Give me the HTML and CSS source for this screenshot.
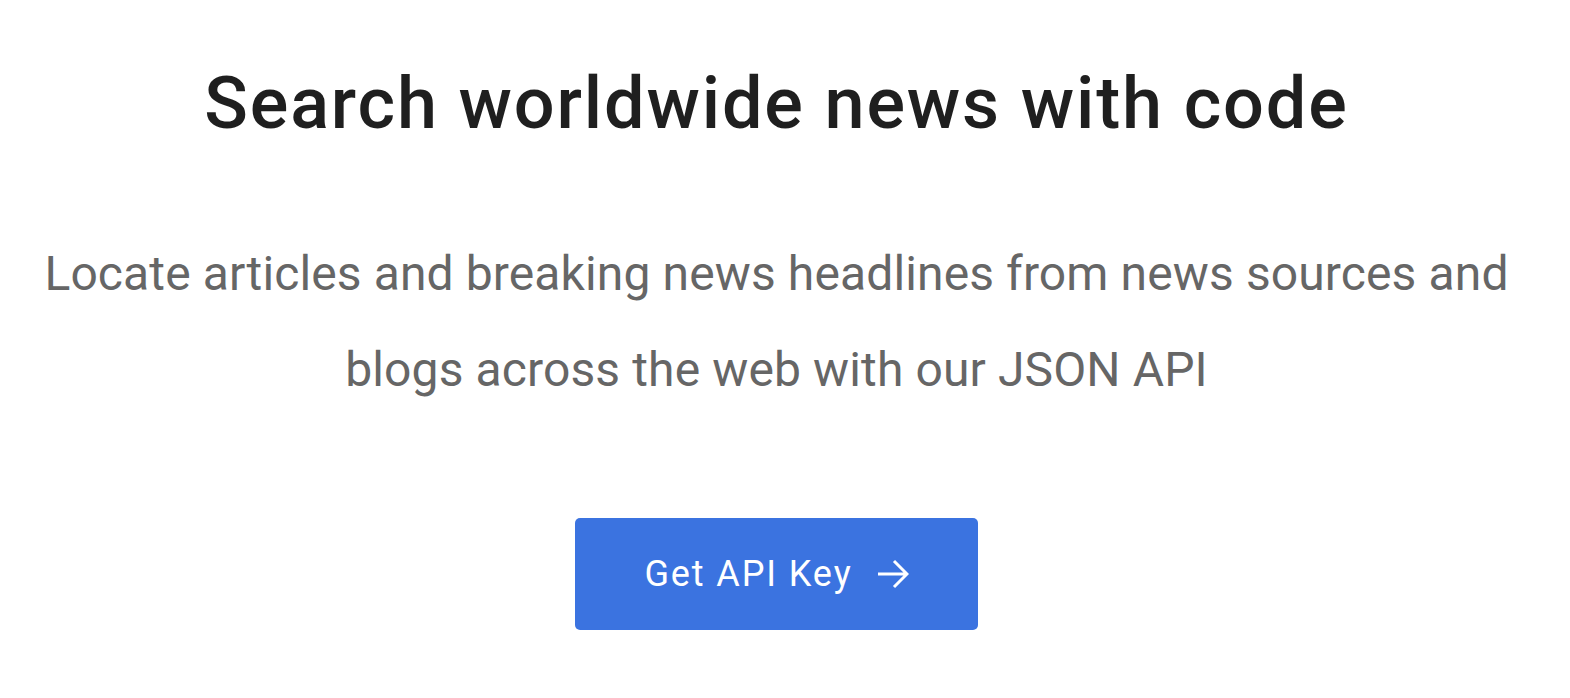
FILE: index.html
```html
<!DOCTYPE html>
<html lang="en">
<head>
<meta charset="utf-8">
<title>Search worldwide news with code</title>
<link rel="stylesheet" href="styles.css">
</head>
<body>
<main class="hero">
  <h1 class="hero-title">Search worldwide news with code</h1>
  <p class="hero-text">Locate articles and breaking news headlines from news sources and blogs across the web with our JSON API</p>
  <a class="cta" href="#">
    <span class="cta-label">Get API Key</span>
    <svg class="cta-icon" width="32" height="32" viewBox="0 0 32 32" aria-hidden="true">
      <path d="M1 16H30M17 3L30 16L17 29" fill="none" stroke="#ffffff" stroke-width="3" stroke-linecap="butt" stroke-linejoin="miter"/>
    </svg>
  </a>
</main>
</body>
</html>
```
FILE: styles.css
```css
html, body {
  margin: 0;
  padding: 0;
  background: #ffffff;
}

body {
  font-family: "Roboto", "Liberation Sans", sans-serif;
}

.hero {
  display: flex;
  flex-direction: column;
  align-items: center;
  text-align: center;
  padding-top: 60px;
  padding-right: 17px;
}

.hero-title {
  margin: 0;
  font-size: 72px;
  line-height: 88px;
  font-weight: 500;
  letter-spacing: 1.85px;
  color: #1f1f1f;
}

.hero-text {
  margin: 78px 0 0 0;
  width: 1500px;
  font-size: 48px;
  line-height: 96px;
  font-weight: 400;
  letter-spacing: 0.12px;
  color: #666666;
}

.cta {
  margin-top: 100px;
  width: 403px;
  height: 112px;
  box-sizing: border-box;
  display: flex;
  align-items: center;
  justify-content: center;
  gap: 24px;
  background: #3b73e0;
  border-radius: 5px;
  text-decoration: none;
  color: #ffffff;
}

.cta-label {
  font-size: 36px;
  font-weight: 400;
  letter-spacing: 1.9px;
}

.cta-icon {
  display: block;
}
```
